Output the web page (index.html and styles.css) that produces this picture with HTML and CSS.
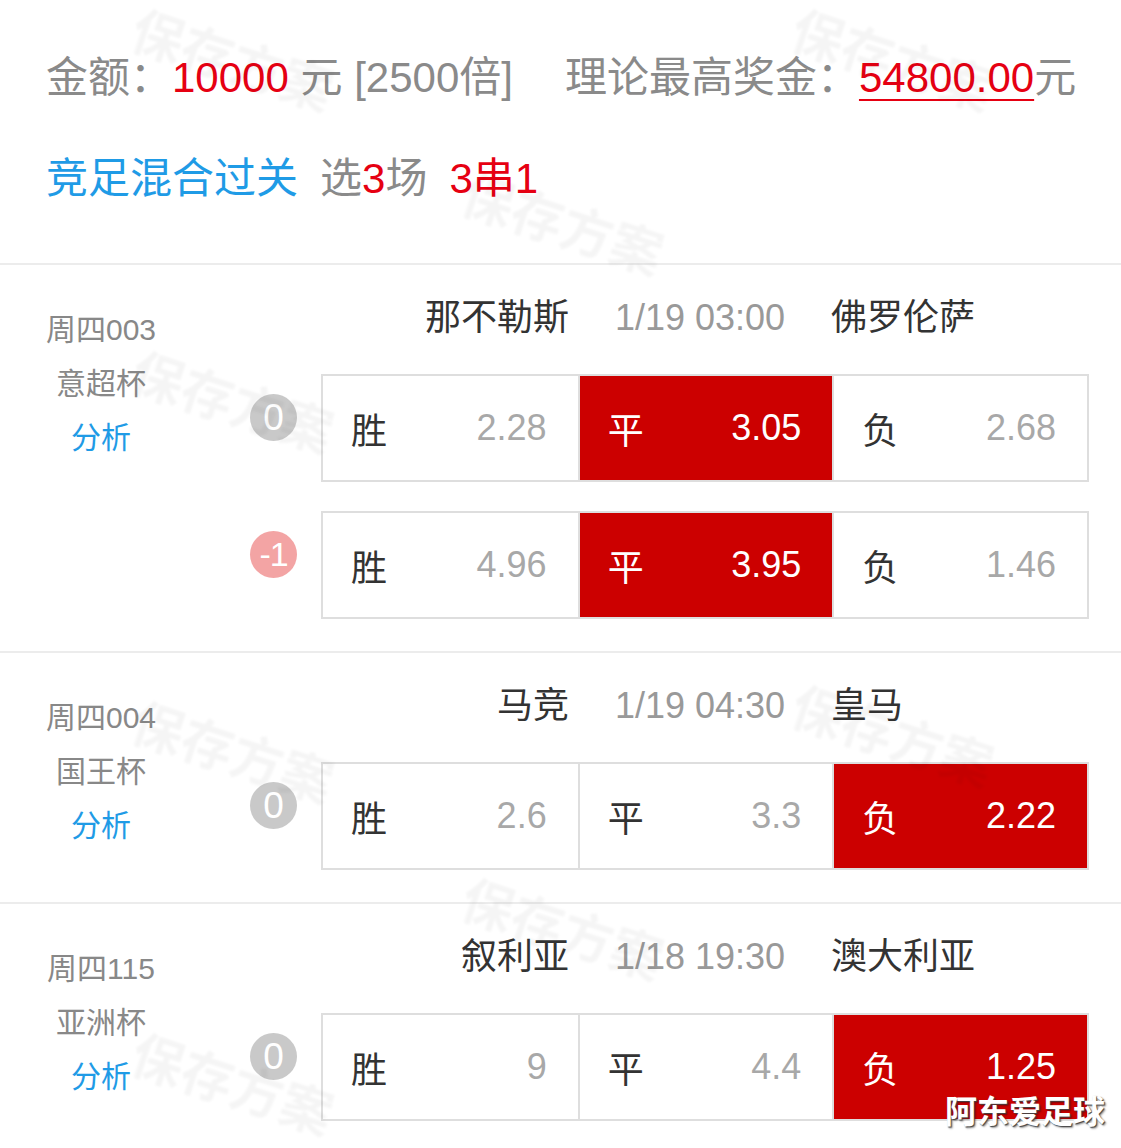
FILE: index.html
```html
<!DOCTYPE html>
<html lang="zh-CN">
<head>
<meta charset="utf-8">
<title>竞足混合过关</title>
<link rel="stylesheet" href="styles.css">
</head>
<body>
<div class="page">
  <header class="summary">
    <div class="sum-line"><span class="lbl">金额：</span><span class="red">10000</span><span class="lbl"> 元 [2500倍]</span><span class="lbl max">理论最高奖金：</span><span class="red under">54800.00</span><span class="lbl">元</span></div>
    <div class="sum-line second"><span class="blue">竞足混合过关</span><span class="lbl pick">选<span class="red">3</span>场</span><span class="red pass">3串1</span></div>
  </header>

  <section class="match">
    <div class="info">
      <div>周四003</div>
      <div>意超杯</div>
      <div class="link">分析</div>
    </div>
    <div class="main">
      <div class="teams"><span class="home">那不勒斯</span><span class="time">1/19 03:00</span><span class="away">佛罗伦萨</span></div>
      <div class="odds-row">
        <div class="badge">0</div>
        <div class="box">
          <div class="cell"><span class="k">胜</span><span class="v">2.28</span></div>
          <div class="cell on"><span class="k">平</span><span class="v">3.05</span></div>
          <div class="cell"><span class="k">负</span><span class="v">2.68</span></div>
        </div>
      </div>
      <div class="odds-row">
        <div class="badge neg">-1</div>
        <div class="box">
          <div class="cell"><span class="k">胜</span><span class="v">4.96</span></div>
          <div class="cell on"><span class="k">平</span><span class="v">3.95</span></div>
          <div class="cell"><span class="k">负</span><span class="v">1.46</span></div>
        </div>
      </div>
    </div>
  </section>

  <section class="match">
    <div class="info">
      <div>周四004</div>
      <div>国王杯</div>
      <div class="link">分析</div>
    </div>
    <div class="main">
      <div class="teams"><span class="home">马竞</span><span class="time">1/19 04:30</span><span class="away">皇马</span></div>
      <div class="odds-row">
        <div class="badge">0</div>
        <div class="box">
          <div class="cell"><span class="k">胜</span><span class="v">2.6</span></div>
          <div class="cell"><span class="k">平</span><span class="v">3.3</span></div>
          <div class="cell on"><span class="k">负</span><span class="v">2.22</span></div>
        </div>
      </div>
    </div>
  </section>

  <section class="match">
    <div class="info">
      <div>周四115</div>
      <div>亚洲杯</div>
      <div class="link">分析</div>
    </div>
    <div class="main">
      <div class="teams"><span class="home">叙利亚</span><span class="time">1/18 19:30</span><span class="away">澳大利亚</span></div>
      <div class="odds-row">
        <div class="badge">0</div>
        <div class="box">
          <div class="cell"><span class="k">胜</span><span class="v">9</span></div>
          <div class="cell"><span class="k">平</span><span class="v">4.4</span></div>
          <div class="cell on"><span class="k">负</span><span class="v">1.25</span></div>
        </div>
      </div>
    </div>
  </section>

  <div class="wm wm1">保存方案</div>
  <div class="wm wm2">保存方案</div>
  <div class="wm wm3">保存方案</div>
  <div class="wm wm4">保存方案</div>
  <div class="wm wm5">保存方案</div>
  <div class="wm wm6">保存方案</div>
  <div class="wm wm7">保存方案</div>
  <div class="wm wm8">保存方案</div>

  <div class="sig">阿东爱足球</div>
</div>
</body>
</html>
```

FILE: styles.css
```css
* {
  box-sizing: border-box;
  margin: 0;
  padding: 0;
}

body {
  margin: 0;
  background: #fff;
  font-family: "Liberation Sans", "Noto Sans CJK SC", sans-serif;
}

.page {
  position: relative;
  width: 1121px;
  height: 1148px;
  overflow: hidden;
  background: #fff;
}

/* summary header */
.summary {
  padding: 48px 0 54px 46px;
}

.sum-line {
  font-size: 42px;
  line-height: 60px;
  color: #8a8a8a;
  white-space: nowrap;
}

.sum-line.second {
  margin-top: 41px;
}

.red {
  color: #e60012;
}

.blue {
  color: #1f9be6;
}

.max {
  margin-left: 52px;
}

.under {
  text-decoration: underline;
  text-decoration-thickness: 2px;
  text-underline-offset: 7px;
}

.pick,
.pass {
  margin-left: 22px;
}

/* match sections */
.match {
  display: flex;
  border-top: 2px solid #ececec;
  padding-bottom: 32px;
}

.info {
  width: 202px;
  padding-top: 38px;
  text-align: center;
  font-size: 30px;
  line-height: 54px;
  color: #888;
}

.info .link {
  color: #1f9be6;
}

.main {
  flex: 1;
  padding: 26px 32px 0 0;
}

.teams {
  display: grid;
  grid-template-columns: 1fr auto 1fr;
  column-gap: 46px;
  margin-left: 109px;
  font-size: 36px;
  line-height: 54px;
  color: #333;
  white-space: nowrap;
}

.home {
  text-align: right;
}

.time {
  color: #999;
}

.odds-row {
  display: flex;
  align-items: flex-start;
  margin-top: 29px;
}

.badge {
  flex: none;
  width: 47px;
  height: 47px;
  margin: 20px 24px 0 48px;
  border-radius: 50%;
  background: #c9c9c9;
  color: #fff;
  font-size: 37px;
  line-height: 47px;
  text-align: center;
}

.badge.neg {
  background: #f3a4a4;
  font-size: 34px;
  letter-spacing: -1px;
}

.box {
  flex: 1;
  display: grid;
  grid-template-columns: repeat(3, 1fr);
  height: 108px;
  border: 2px solid #dedede;
}

.cell {
  display: flex;
  justify-content: space-between;
  align-items: center;
  padding: 0 31px 0 28px;
  font-size: 36px;
}

.cell + .cell {
  border-left: 2px solid #dedede;
}

.cell .k {
  color: #333;
}

.cell .v {
  color: #a8a8a8;
}

.cell.on {
  background: #cc0000;
}

.cell.on .k,
.cell.on .v {
  color: #fff;
}

/* faint watermark overlay */
.wm {
  position: absolute;
  font-size: 52px;
  line-height: 1;
  font-weight: bold;
  color: rgba(0, 0, 0, 0.04);
  transform: rotate(18deg);
  white-space: nowrap;
  pointer-events: none;
  filter: blur(1px);
}

.wm1 { left: 128px; top: 36px; }
.wm2 { left: 788px; top: 36px; }
.wm3 { left: 458px; top: 200px; }
.wm4 { left: 128px; top: 378px; }
.wm5 { left: 128px; top: 728px; }
.wm6 { left: 788px; top: 712px; }
.wm7 { left: 458px; top: 905px; }
.wm8 { left: 128px; top: 1060px; }

/* author signature */
.sig {
  position: absolute;
  right: 16px;
  bottom: 18px;
  font-size: 32px;
  line-height: 36px;
  font-weight: bold;
  color: #fff;
  text-shadow: 1px 1px 1px #444, 2px 2px 2px rgba(0, 0, 0, 0.35);
  white-space: nowrap;
}
```
